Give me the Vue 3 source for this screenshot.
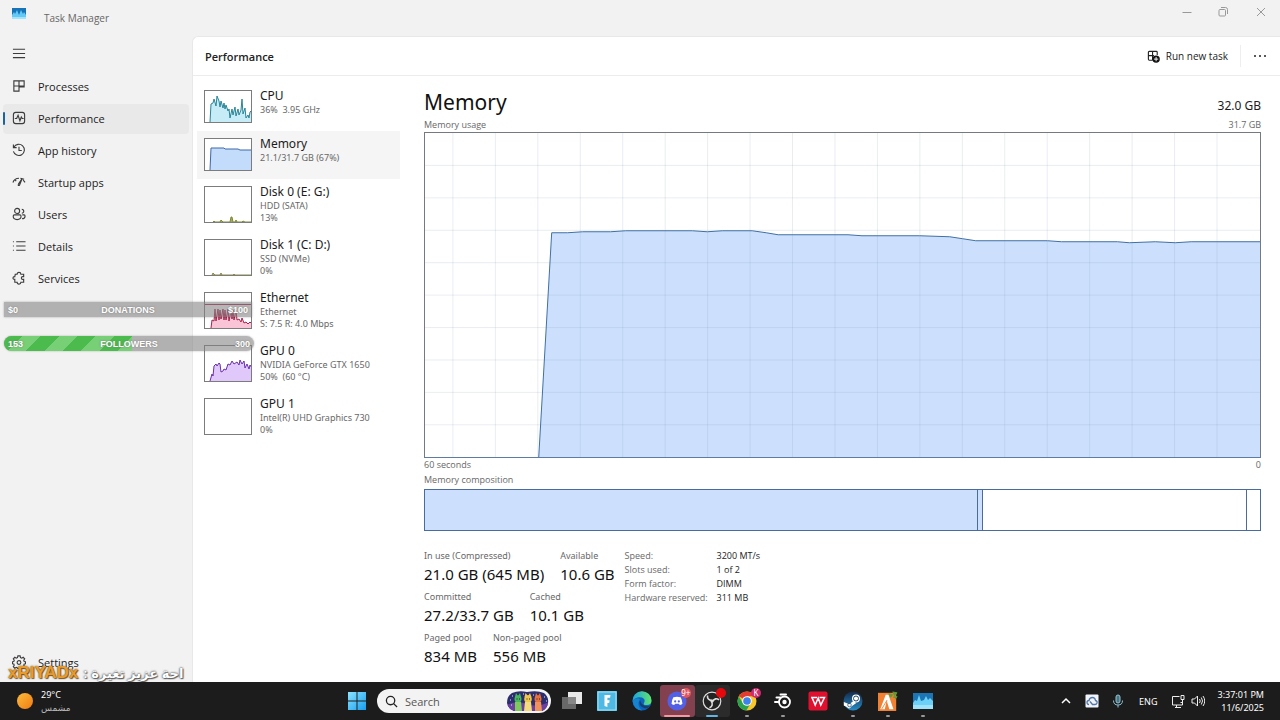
<script setup>
import { ref } from 'vue'

const navItems = [
  { name: 'Processes', d: 'M2 2h11v6.500h-5.500v4.500h-5.500zM7.500 2v6.500M2 7.500h11' },
  { name: 'Performance', d: 'M4 1.500h7q2.500 0 2.500 2.500v7q0 2.500-2.500 2.500h-7q-2.500 0-2.500-2.500v-7q0-2.500 2.500-2.500zM3 8h2l1.500-3.500 2 6 1.500-4 1 1.500h1.500' },
  { name: 'App history', d: 'M1.500 1.500v3.500h3.500M2 4.500a6 6 0 1 1-.5 4.500M7.500 4v4h3' },
  { name: 'Startup apps', d: 'M1 8q1.500-4.500 6.500-4.500M12 5.500l2 2.500M3 5l1.500 1.500M7 9.500l4-6M7 9.500q-1 2.500 1 1.500l3-7.500M9 3.500l4 1' },
  { name: 'Users', d: 'M5.500 1.500a2.700 2.700 0 1 1 0 5.400a2.700 2.700 0 1 1 0-5.400zM10.500 2.500a2 2 0 1 1 0 4.200M2.500 8.500h6q1.200 0 1.200 1.500q0 3.500-4.200 3.500t-4.200-3.500q0-1.500 1.200-1.500zM11 8.500h2q1 0 1 1.300q0 2.700-3.200 2.700' },
  { name: 'Details', d: 'M1 3h1M1 7.500h1M1 12h1M4.500 3h10M4.500 7.500h10M4.500 12h10' },
  { name: 'Services', d: 'M3.500 3.500h2q0-2 2-2t2 2h3v2.500h-1q-1.500 0-1.500 1.500t1.500 1.500h1v3h-3q0 2-2 2t-2-2h-2.500v-3q-2 0-2-1.500t2-1.500z' }
]
const current = ref('Performance')

const devices = [
  {
    name: 'CPU', lines: ['36%  3.95 GHz'], h: 33, stroke: '#2a8597', fill: '#c5ecf7',
    line: '6,32 7,14 9,13 10,9 12,16 13,6 15,11 16,17 17,11 19,18 20,13 21,19 22,15 24,21 25,19 26,28 28,19 29,25 31,17 32,26 34,19 35,25 37,20 38,9 39,24 41,18 42,28 44,25 45,28 46,22 48,20'
  },
  {
    name: 'Memory', lines: ['21.1/31.7 GB (67%)'], h: 33, stroke: '#3f68a8', fill: '#c3dcfb',
    line: '6,32 7,10 20,10 21,11 34,11 36,12 48,12'
  },
  {
    name: 'Disk 0 (E: G:)', lines: ['HDD (SATA)', '13%'], h: 37, stroke: '#7d8a2c', fill: '#a9a46a',
    line: '9,36 10,35 11,36 16,36 17,34 19,36 26,36 27,31 28,31 29,36 31,36 32,34 33,36 38,36 39,35 41,36 48,36'
  },
  {
    name: 'Disk 1 (C: D:)', lines: ['SSD (NVMe)', '0%'], h: 37, stroke: '#8c8c3c', fill: '#a9a46a',
    line: '8,36 9,34 11,36 16,36 17,34 18,36 29,36 30,35 31,36 48,36'
  },
  {
    name: 'Ethernet', lines: ['Ethernet', 'S: 7.5 R: 4.0 Mbps'], h: 37, stroke: '#a8224c', fill: '#f9c5d6', limit: true,
    line: '7,36 8,28 10,29 11,17 12,29 14,17 15,28 16,18 17,27 19,17 20,28 21,18 22,28 24,17 25,29 27,18 28,27 29,18 30,28 32,18 33,28 35,27 37,30 38,26 40,31 42,30 44,32 46,30 48,32'
  },
  {
    name: 'GPU 0', lines: ['NVIDIA GeForce GTX 1650', '50%  (60 °C)'], h: 37, stroke: '#6a2fae', fill: '#e0c8fa',
    line: '6,36 8,29 9,31 10,21 12,19 13,21 15,18 16,19 17,27 19,26 20,24 22,25 24,19 26,20 28,16 30,19 33,17 35,20 36,15 38,19 40,16 41,23 43,19 45,24 46,20 48,23'
  },
  { name: 'GPU 1', lines: ['Intel(R) UHD Graphics 730', '0%'], h: 37, stroke: '#777', fill: '#fff', line: '' }
]
const device = ref('Memory')

const vLines = Array.from({ length: 19 }, (_, i) => 28 + i * 42.55)
const hLines = Array.from({ length: 9 }, (_, i) => (i + 1) * 32.5)
const usage = '114,325 127,100 143,100 158,99 186,99 201,98 268,98 283,99 298,98 328,98 342,100 354,102 424,102 438,103 496,103 526,104 539,106 552,108 624,108 638,109 694,109 706,110 732,109 752,110 768,109 837,109'

const statRows = [
  [['In use (Compressed)', '21.0 GB (645 MB)'], ['Available', '10.6 GB']],
  [['Committed', '27.2/33.7 GB'], ['Cached', '10.1 GB']],
  [['Paged pool', '834 MB'], ['Non-paged pool', '556 MB']]
]
const facts = [['Speed:', '3200 MT/s'], ['Slots used:', '1 of 2'], ['Form factor:', 'DIMM'], ['Hardware reserved:', '311 MB']]
const goals = [
  { name: 'DONATIONS', now: 0, max: 100, unit: '$' },
  { name: 'FOLLOWERS', now: 153, max: 300, unit: '', round: true }
]
</script>

<template>
  <div class="desktop">
    <div class="window">
      <header class="titlebar">
        <svg class="app-icon" viewBox="0 0 14 11"><rect width="14" height="11" fill="#63c9f5" /><path d="M0 0h14v7l-2-3-1 2-2-4-2 5-2-5-2 4-1-2-2 3z" fill="#1673b8" /><path d="M0 9h14v2h-14z" fill="#a5e2fb" /></svg>
        <span class="app-name">Task Manager</span>
        <div class="captions">
          <button aria-label="Minimize"><svg viewBox="0 0 10 10"><path d="M0.500 5.500h9" /></svg></button>
          <button aria-label="Restore"><svg viewBox="0 0 10 10"><path d="M1 3.500q0-1 1-1h4.500q1 0 1 1v4.500q0 1-1 1h-4.500q-1 0-1-1zM3 .5h4.500q2 0 2 2v4.500" /></svg></button>
          <button aria-label="Close"><svg viewBox="0 0 10 10"><path d="M1 1l8 8M9 1l-8 8" /></svg></button>
        </div>
      </header>

      <div class="body">
        <nav class="sidebar">
          <button class="nav-item menu" aria-label="Menu"><svg class="nav-icon" viewBox="0 0 15 15"><path d="M1 3.500h13M1 8h13M1 12.500h13" /></svg></button>
          <button v-for="n in navItems" :key="n.name" class="nav-item" :class="{ on: n.name === current }" @click="current = n.name">
            <svg class="nav-icon" viewBox="0 0 15 15"><path :d="n.d" /></svg>
            <span>{{ n.name }}</span>
          </button>
          <button class="nav-item settings">
            <svg class="nav-icon" viewBox="0 0 15 15"><path d="M6.300 1h2.400l.4 1.800 1.300.6 1.600-1 1.600 1.600-1 1.600.5 1.300 1.400.4v2l-1.400.4-.5 1.300 1 1.600-1.600 1.600-1.600-1-1.300.6-.4 1.200h-2.400l-.4-1.200-1.300-.6-1.600 1-1.600-1.600 1-1.600-.5-1.300-1.400-.4v-2l1.400-.4.5-1.300-1-1.600 1.600-1.600 1.600 1 1.300-.6z" /><circle cx="7.500" cy="8" r="2" /></svg>
            <span>Settings</span>
          </button>
        </nav>

        <main class="page">
          <div class="page-head">
            <h1>Performance</h1>
            <button class="run">
              <svg viewBox="0 0 14 14"><path d="M1.500 2.500q0-1 1-1h7.500q1 0 1 1v3M6 1.500v9.500M1.500 6h6M1.500 2.500v7.500q0 1 1 1h3.500" fill="none" stroke="#222" stroke-width="1.200" /><circle cx="9.800" cy="9.800" r="4" fill="#111" /><path d="M9.800 7.500v4.600M7.500 9.800h4.600" stroke="#fff" /></svg>
              Run new task
            </button>
            <button class="more" aria-label="More options"><i></i><i></i><i></i></button>
          </div>

          <div class="panes">
            <div class="devices">
              <button v-for="d in devices" :key="d.name" class="device" :class="{ on: d.name === device }" @click="device = d.name">
                <svg class="thumb" :class="{ tall: d.h === 37 }" :viewBox="`0 0 48 ${d.h}`">
                  <rect width="48" :height="d.h" fill="#fff" />
                  <polygon v-if="d.line" :points="`${d.line} 48,${d.h}`" :fill="d.fill" />
                  <polyline :points="d.line" fill="none" :stroke="d.stroke" />
                  <path v-if="d.limit" d="M0 12.500h48" :stroke="d.stroke" />
                  <rect x=".5" y=".5" width="47" :height="d.h - 1" fill="none" stroke="#7c7c7c" />
                </svg>
                <span class="device-text">
                  <span class="device-name">{{ d.name }}</span>
                  <span v-for="l in d.lines" :key="l" class="device-line">{{ l }}</span>
                </span>
              </button>
            </div>

            <section class="detail">
              <div class="detail-head"><h2>Memory</h2><span class="total">32.0 GB</span></div>
              <div class="caption"><span>Memory usage</span><span>31.7 GB</span></div>
              <svg class="chart" viewBox="0 0 837 325" preserveAspectRatio="none">
                <polygon :points="`${usage} 837,325`" fill="#cce0fd" />
                <g stroke="#7890ac" stroke-opacity=".17">
                  <path v-for="x in vLines" :key="'v' + x" :d="`M${x} 0v325`" />
                  <path v-for="y in hLines" :key="'h' + y" :d="`M0 ${y}h837`" />
                </g>
                <polyline :points="usage" fill="none" stroke="#3f6fa3" />
              </svg>
              <div class="caption under"><span>60 seconds</span><span>0</span></div>
              <div class="caption"><span>Memory composition</span></div>
              <div class="composition"><i class="used"></i><i class="modified"></i><i class="standby"></i><i class="free"></i></div>

              <div class="stats">
                <div class="stat-rows">
                  <div v-for="(r, i) in statRows" :key="i" class="stat-row">
                    <div v-for="s in r" :key="s[0]"><div class="stat-label">{{ s[0] }}</div><div class="stat-value">{{ s[1] }}</div></div>
                  </div>
                </div>
                <dl class="facts">
                  <template v-for="f in facts" :key="f[0]"><dt>{{ f[0] }}</dt><dd>{{ f[1] }}</dd></template>
                </dl>
              </div>
            </section>
          </div>
        </main>
      </div>

      <div class="goals">
        <div v-for="g in goals" :key="g.name" class="goal" :class="{ round: g.round }">
          <div class="goal-fill" :style="{ width: (g.now / g.max) * 100 + '%' }"></div>
          <span>{{ g.unit }}{{ g.now }}</span><span>{{ g.name }}</span><span>{{ g.unit }}{{ g.max }}</span>
        </div>
      </div>
      <div class="ticker"><b>xRIYADx</b><span dir="rtl" lang="ar">احة عزيز تغيرة :</span></div>
    </div>

    <footer class="taskbar">
      <button class="weather">
        <i class="sun"></i>
        <span><span class="temp">29°C</span><span lang="ar" class="sky">مشمس</span></span>
      </button>

      <div class="dock">
        <button class="start" aria-label="Start">
          <svg viewBox="0 0 20 20"><defs><linearGradient id="win" x2="1" y2="1"><stop stop-color="#8be4ff" /><stop offset="1" stop-color="#169df0" /></linearGradient></defs><path d="M1 1h8.500v8.500h-8.500zM10.500 1h8.500v8.500h-8.500zM1 10.500h8.500v8.500h-8.500zM10.500 10.500h8.500v8.500h-8.500z" fill="url(#win)" /></svg>
        </button>
        <label class="search">
          <svg class="lens" viewBox="0 0 14 14"><circle cx="6" cy="6" r="4.500" /><path d="M9.300 9.300l3.700 3.700" /></svg>
          <input type="text" placeholder="Search" aria-label="Search" />
          <svg class="art" viewBox="0 0 42 20">
            <defs><clipPath id="pill"><path d="M5 2q7-3 15-1 10-2 17 1 5 4 4 10-1 6-6 8h-28q-6-2-7-8 0-7 5-10z" /></clipPath></defs>
            <g clip-path="url(#pill)">
              <rect width="42" height="20" fill="#2b2d6e" /><path d="M0 14q10-5 20-1t22-2v9h-42z" fill="#6b3fa0" />
              <circle cx="11" cy="8" r="3.500" fill="#46b85c" /><path d="M8 20v-9h6l1 9z" fill="#7fc95a" /><path d="M8 6l1-4 2 3 2-3 1 4z" fill="#46b85c" />
              <circle cx="21" cy="8" r="3.800" fill="#f0c94c" /><path d="M17 20l1-9h6l1 9z" fill="#f4dc7c" /><path d="M17.500 6l1-4 2.500 3 2-3 1.500 4z" fill="#f0c94c" />
              <circle cx="31" cy="8" r="3.500" fill="#e8713c" /><path d="M28 20v-9h6l1 9z" fill="#f0915a" /><path d="M28 6l1-4 2 3 2-3 1 4z" fill="#e8713c" />
              <path d="M9.500 8h1M12 8h1M19.500 8h1M22 8h1M29.500 8h1M32 8h1" stroke="#222" />
              <path d="M3 9h1M5 5h1M16 3h1M26 4h1M37 6h1M39 10h1M4 14h1" stroke="#dfe6ff" />
            </g>
          </svg>
        </label>

        <div class="apps">
          <button aria-label="Task view"><svg viewBox="0 0 20 20"><rect x="6" y="1" width="14" height="12" fill="#e9e9e9" /><rect x="0" y="6" width="14" height="12" fill="#777" fill-opacity=".85" /></svg></button>
          <button aria-label="F">
            <svg viewBox="0 0 20 20"><rect width="20" height="20" fill="#4fb9e4" /><path d="M1 1h18v18h-18z" fill="none" stroke="#9de2f8" /><path d="M7.500 4h6l-.4 2.800h-2.700v2.500h2.200l-.4 2.700h-1.800v4l-2.900-1z" fill="#fff" /></svg>
          </button>
          <button aria-label="Edge">
            <svg viewBox="0 0 20 20"><defs><linearGradient id="edge" x2="1"><stop stop-color="#1ba4e0" /><stop offset="1" stop-color="#62e36c" /></linearGradient></defs><circle cx="10" cy="10" r="9.500" fill="#0d62bd" /><path d="M.5 10a9.500 9.500 0 0 1 19-.5q0 4.500-5 4.500-4 0-2.500-2 2-4-2-5.500-6-1.500-9.500 3.500z" fill="url(#edge)" /><path d="M8 9q-2 6 4 8 4 1 6.500-2.500-5 2-8.500-1.500-1.500-2-2-4z" fill="#173d6b" /><path d="M.5 10q3-4 7.500-2-4 6 2 11.500-8-.5-9.500-9.500z" fill="#1685d0" /></svg>
          </button>
          <button class="alert" aria-label="Discord">
            <svg viewBox="0 0 22 22"><circle cx="11" cy="11" r="10.500" fill="#5260e6" /><path d="M7 7q4-1.500 8 0 2 3.500 2 7-1.500 1.500-3 1.500l-.8-1.500h-4.400l-.8 1.500q-1.500 0-3-1.500 0-3.500 2-7z" fill="#fff" /><circle cx="9" cy="11.500" r="1.200" fill="#5260e6" /><circle cx="13" cy="11.500" r="1.200" fill="#5260e6" /></svg>
            <span class="badge nine">9+</span>
          </button>
          <button class="focused" aria-label="OBS">
            <svg viewBox="0 0 20 20"><circle cx="10" cy="10" r="8.800" fill="#232323" stroke="#dedede" stroke-width="1.200" /><g fill="none" stroke="#dedede" stroke-width="1.600"><path id="blade" d="M10 9.500q-5-.5-4.500-5" /><path d="M10 9.500q-5-.5-4.500-5" transform="rotate(120 10 10)" /><path d="M10 9.500q-5-.5-4.500-5" transform="rotate(240 10 10)" /></g><circle cx="10" cy="10" r="1.600" fill="#dedede" /></svg>
            <span class="badge rec"></span>
          </button>
          <button class="running" aria-label="Chrome">
            <svg viewBox="0 0 20 20"><circle cx="10" cy="10" r="9.500" fill="#f7c72c" /><path d="M1.800 5.200a9.500 9.500 0 0 1 16.500 0h-8.300v4.800z" fill="#e33b2e" /><path d="M1.800 5.200a9.500 9.500 0 0 0 7.500 14.300l4.500-7.500-7.800.5z" fill="#2aa350" /><circle cx="10" cy="10" r="4.800" fill="#fff" /><circle cx="10" cy="10" r="3.800" fill="#3b82ee" /></svg>
            <span class="badge profile">K</span>
          </button>
          <button class="running" aria-label="SteelSeries">
            <svg viewBox="0 0 20 20"><circle cx="11.500" cy="11" r="5.500" fill="none" stroke="#fff" stroke-width="1.800" /><circle cx="11.500" cy="11" r="2.200" fill="#fff" /><path d="M7.500 3.500h5.500M3.500 6.500h4M2 11h4" fill="none" stroke="#fff" stroke-width="2" stroke-linecap="round" /></svg>
          </button>
          <button aria-label="WPS Office">
            <svg viewBox="0 0 20 20"><rect x=".5" y=".5" width="19" height="19" rx="2" fill="#e0102f" /><path d="M3 6.500h6M4 6.500l3.200 7.500 3-7 2.600 7 3.700-7.500h-5" fill="none" stroke="#fff" stroke-width="1.500" /></svg>
          </button>
          <button class="running" aria-label="Steam">
            <svg viewBox="0 0 20 20"><defs><linearGradient id="steam" x2="0" y2="1"><stop stop-color="#14294b" /><stop offset="1" stop-color="#278bc4" /></linearGradient></defs><circle cx="10" cy="10" r="9.500" fill="url(#steam)" /><path d="M.8 11l5.500 2.300 4-3.300 3 2-5 3.500q-2 3.500-4.500.5l-3-1.500z" fill="#fff" /><circle cx="13" cy="7.500" r="4" fill="#fff" /><circle cx="13" cy="7.500" r="2.500" fill="none" stroke="#27476b" /><circle cx="6.500" cy="14" r="1.800" fill="none" stroke="#27476b" stroke-width=".7" /></svg>
          </button>
          <button class="running" aria-label="FiveM">
            <svg viewBox="0 0 22 22"><rect y="2" width="20" height="20" fill="#f08132" /><path d="M8.500 4h3l5.500 16h-4.500l-3-9.500-2 9.500h-5z" fill="#fff" /><path d="M4 20l6-10" stroke="#f08132" /><path d="M12 3l4 1-2 3zM16 1l5 1-4 5 4-1-2 3" fill="#5c9b38" stroke="#5c9b38" /></svg>
          </button>
          <button class="running" aria-label="Task Manager">
            <svg viewBox="0 0 20 20"><rect y="2" width="20" height="16" fill="#1c76b5" /><path d="M0 12l2-3 2 1 2-6 2 6 3-1 2-4 2 4 2-2 3 3v8h-20z" fill="#6dd0f7" /><path d="M0 14h20v4h-20z" fill="#9ee2fb" /></svg>
          </button>
        </div>
      </div>

      <div class="tray">
        <button aria-label="Hidden icons"><svg viewBox="0 0 14 14"><path d="M3 9l4-4 4 4" stroke="#fff" stroke-width="1.500" /></svg></button>
        <button aria-label="Cloud"><svg viewBox="0 0 14 14"><rect x=".5" y=".5" width="13" height="13" rx="1" fill="#f1f5fb" /><path d="M4 10.500q-2 0-2-2t2-2q.5-3 3.500-3 2.500 0 3 3 2 .5 1.500 2.500-.5 1.500-2 1.500h-2.500l-2.500-3" stroke="#5277aa" stroke-width="1.300" /></svg></button>
        <button aria-label="Microphone"><svg viewBox="0 0 14 14"><rect x="5" y="1" width="4" height="8" rx="2" fill="#4a7482" stroke="#8fc3d4" /><path d="M2.500 6.500q0 4.500 4.500 4.500t4.500-4.500M7 11v2.500" stroke="#8fc3d4" /></svg></button>
        <button class="lang">ENG</button>
        <button class="net" aria-label="Network and volume">
          <svg viewBox="0 0 14 14"><path d="M8.500 2.500h-7v8.500h10v-3M4 13.500h6M5.500 11v2M10 1.500h3v4h-3zM11.500 5.500v3h-2" stroke="#eee" /></svg>
          <svg viewBox="0 0 14 14"><path d="M1 5h2.500l3-3v10l-3-3h-2.500zM8.500 5q1.500 2 0 4M10.300 3.500q2.500 3.500 0 7M12 2q3.500 5 0 10" stroke="#eee" /></svg>
        </button>
        <button class="clock"><span>3:37:01 PM</span><span>11/6/2025</span></button>
      </div>
    </footer>
  </div>
</template>

<style>
body { background: #f2f2f2; }
</style>

<style scoped>
.desktop { min-height: 100vh; display: flex; flex-direction: column; font-family: "Noto Sans", "Open Sans", "DejaVu Sans", sans-serif; color: #1c1c1c; background: #f2f2f2; }
button { border: 0; padding: 0; margin: 0; background: none; font: inherit; color: inherit; text-align: left; }
svg { display: block; flex: none; }
h1, h2, dl, dd { margin: 0; font-weight: 400; }

.window { position: relative; flex: 1; display: flex; flex-direction: column; overflow: hidden; }
.titlebar { height: 36px; display: flex; align-items: center; padding-left: 12px; }
.app-icon { width: 14px; height: 11px; align-self: flex-start; margin-top: 8px; }
.app-name { margin-left: 18px; font-family: "Open Sans", "Noto Sans", sans-serif; font-size: 10px; color: #666; }
.captions { margin-left: auto; align-self: flex-start; display: flex; }
.captions button { width: 36px; height: 23px; display: grid; place-items: center; }
.captions button:last-child { width: 39px; }
.captions svg { width: 10px; height: 10px; fill: none; stroke: #999; }

.body { flex: 1; display: flex; }
.sidebar { width: 192px; flex: none; box-sizing: border-box; display: flex; flex-direction: column; gap: 2px; padding: 2px 3px 4px; }
.nav-item { position: relative; height: 30px; box-sizing: border-box; display: flex; align-items: center; gap: 12px; padding: 0 0 2px 9px; border-radius: 4px; font-family: "Open Sans", "Noto Sans", sans-serif; font-size: 11px; }
.nav-item.menu { height: 32px; }
.nav-item.on { background: #e9e9e9; }
.nav-item.on::before { content: ""; position: absolute; left: 0; top: 8px; width: 2px; height: 13px; border-radius: 1px; background: #1a62a5; }
.nav-icon { width: 14px; height: 14px; fill: none; stroke: #3c3c3c; stroke-width: 1.2; }
.settings { margin-top: auto; }

.page { flex: 1; min-width: 0; display: flex; flex-direction: column; background: #fff; border: 1px solid #e8e8e8; border-width: 1px 0 0 1px; border-top-left-radius: 6px; }
.page-head { height: 38px; display: flex; align-items: center; padding: 0 14px 0 12px; border-bottom: 1px solid #ececec; font-family: "Open Sans", "Noto Sans", sans-serif; }
h1 { font-size: 11px; font-weight: 600; color: #222; }
.run { margin-left: auto; display: flex; align-items: center; gap: 6px; padding-right: 12px; height: 22px; border-right: 1px solid #eee; font-size: 10px; }
.run svg { width: 13px; height: 13px; }
.more { display: flex; gap: 3px; margin-left: 13px; }
.more i { width: 2px; height: 2px; border-radius: 1px; background: #222; }

.panes { flex: 1; display: flex; }
.devices { width: 207px; flex: none; padding: 7px 0 0 4px; box-sizing: border-box; }
.device { width: 100%; display: flex; gap: 8px; padding: 4px 0 3px 7px; box-sizing: border-box; }
.device.on { background: #f5f5f5; }
.thumb { width: 48px; height: 33px; margin: 3px 0 5px; }
.thumb.tall { height: 37px; margin-bottom: 6px; }
.device-text { display: flex; flex-direction: column; white-space: pre; }
.device-name { font-size: 12px; line-height: 17px; }
.device-line { font-size: 9px; line-height: 12px; color: #686868; }

.detail { flex: 1; min-width: 0; display: flex; flex-direction: column; padding: 10px 19px 15px 24px; }
.detail-head { display: flex; justify-content: space-between; align-items: flex-end; }
h2 { font-size: 21px; line-height: 32px; color: #111; }
.total { font-size: 12px; line-height: 24px; }
.caption { display: flex; justify-content: space-between; font-family: "Open Sans", "Noto Sans", sans-serif; font-size: 9px; line-height: 14px; color: #686868; }
.chart { flex: 1; width: 100%; min-height: 200px; height: 0; box-sizing: border-box; border: 1px solid #757a80; border-bottom-color: #5d7ca0; }
.caption.under { padding-bottom: 1px; }
.composition { display: flex; height: 40px; margin-top: 2px; border: 1px solid #4a6c9c; }
.composition i { box-sizing: border-box; border-right: 1px solid #4a6c9c; }
.used { flex: 555; background: #cce0fd; }
.modified { flex: 4; background: #cce0fd; }
.standby { flex: 264; }
.composition .free { flex: 13; border: 0; }

.stats { display: flex; gap: 10px; margin-top: 18px; }
.stat-rows { display: flex; flex-direction: column; gap: 5px; }
.stat-row { display: flex; gap: 16px; }
.stat-label { font-size: 9px; line-height: 14px; color: #686868; }
.stat-value { font-size: 15px; line-height: 22px; color: #111; }
.facts { display: grid; grid-template-columns: 92px auto; align-content: start; font-family: "Open Sans", "Noto Sans", sans-serif; font-size: 9px; line-height: 14px; }
.facts dt { color: #686868; }

.goals { position: absolute; left: 4px; top: 302px; width: 248px; display: flex; flex-direction: column; gap: 19px; font-family: "Liberation Sans", Arial, sans-serif; font-size: 9px; font-weight: 700; color: #fff; }
.goal { position: relative; height: 15px; padding: 0 4px; display: grid; grid-template-columns: 1fr auto 1fr; align-items: center; background: rgba(130, 130, 130, .58); box-shadow: 0 0 2px rgba(0, 0, 0, .3); overflow: hidden; }
.goal.round { border-radius: 8px; width: 242px; }
.goal span { position: relative; text-shadow: 0 0 2px #777; }
.goal span:last-child { text-align: right; }
.goal-fill { position: absolute; left: 0; top: 0; bottom: 0; background: repeating-linear-gradient(135deg, #4abb4c 0 13px, #77cf76 13px 26px); }

.ticker { position: absolute; left: 8px; bottom: -4px; display: flex; align-items: center; gap: 5px; height: 26px; font-family: "Liberation Sans", "DejaVu Sans", sans-serif; font-size: 17px; font-weight: 700; white-space: nowrap; }
.ticker b { color: #e99a2b; text-shadow: 0 0 2px #6b4a1a, 1px 1px 1px #7a5a2a; }
.ticker span { color: #fff; font-size: 13px; text-shadow: 0 0 2px #555, 0 0 2px #555, 1px 1px 1px #666; }

.taskbar { height: 38px; flex: none; display: grid; grid-template-columns: 1fr auto 1fr; align-items: center; background: #1c1c1c; color: #fff; }
.weather { display: flex; align-items: center; gap: 8px; padding-left: 17px; font-size: 9px; line-height: 13px; }
.weather > span > span { display: block; }
.sun { width: 16px; height: 16px; border-radius: 50%; background: linear-gradient(135deg, #fbbd3c, #f07a13); }
.sky { color: #bbb; }
.dock { display: flex; align-items: center; gap: 3px; }
.start { width: 35px; display: grid; place-items: center; }
.start svg { width: 20px; height: 20px; }
.search { box-sizing: border-box; width: 174px; height: 24px; display: flex; align-items: center; background: #f3f3f3; border-radius: 12px; padding: 0 2px 0 8px; }
.lens { width: 13px; height: 13px; fill: none; stroke: #222; stroke-width: 1.4; }
.search input { flex: 1; min-width: 0; border: 0; outline: 0; padding: 0 0 0 7px; background: none; font: inherit; font-family: "Open Sans", "Noto Sans", sans-serif; font-size: 11px; color: #555; }
.search input::placeholder { color: #555; opacity: 1; }
.art { width: 42px; height: 20px; }
.apps { width: 387px; display: grid; grid-template-columns: repeat(11, 1fr); }
.apps button { position: relative; height: 32px; display: grid; place-items: center; border-radius: 3px; }
.apps svg { width: 20px; height: 20px; }
.apps .alert { background: #83404f; }
.apps .focused { background: #2b2b2b; }
.running::after, .alert::after, .focused::after { content: ""; position: absolute; left: 50%; bottom: 0; width: 4px; margin-left: -2px; height: 2px; border-radius: 1px; background: #999; }
.alert::after { width: 26px; margin-left: -13px; background: #f598a0; }
.focused::after { width: 12px; margin-left: -6px; background: #60b5e3; }
.badge { position: absolute; right: 4px; top: 3px; min-width: 10px; height: 10px; border-radius: 5px; font-size: 8px; line-height: 10px; text-align: center; }
.nine { background: #df5660; }
.rec { background: #e5090d; }
.profile { background: #cf2b70; }
.tray { justify-self: end; display: flex; align-items: center; gap: 12px; padding-right: 16px; font-size: 10px; }
.tray svg { width: 14px; height: 14px; fill: none; }
.lang { margin: 0 2px; font-size: 9px; }
.net { display: flex; gap: 6px; }
.clock { font-size: 9px; line-height: 13px; text-align: right; }
.clock span { display: block; }
</style>
